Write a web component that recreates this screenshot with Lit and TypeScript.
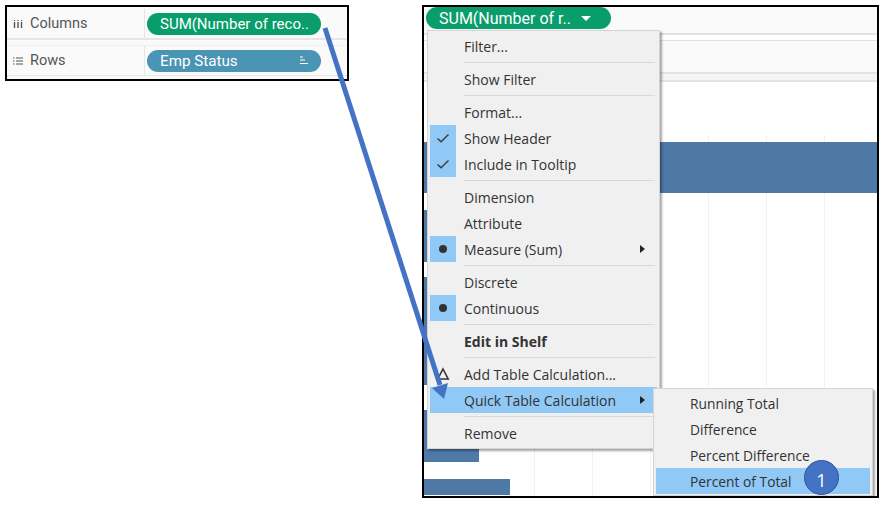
import { LitElement, html, css, svg } from "lit";
import { customElement } from "lit/decorators.js";

type Row = { label?: string; mark?: "check" | "dot" | "delta"; bold?: boolean; more?: boolean; active?: boolean; sep?: boolean };

const menuRows: Row[] = [
  { label: "Filter..." },
  { sep: true },
  { label: "Show Filter" },
  { sep: true },
  { label: "Format..." },
  { label: "Show Header", mark: "check" },
  { label: "Include in Tooltip", mark: "check" },
  { sep: true },
  { label: "Dimension" },
  { label: "Attribute" },
  { label: "Measure (Sum)", mark: "dot", more: true },
  { sep: true },
  { label: "Discrete" },
  { label: "Continuous", mark: "dot" },
  { sep: true },
  { label: "Edit in Shelf", bold: true },
  { sep: true },
  { label: "Add Table Calculation...", mark: "delta" },
  { label: "Quick Table Calculation", more: true, active: true },
  { sep: true },
  { label: "Remove" },
];

// chart bars: top, height, width (px from the frame's left edge)
const bars = [
  [135, 51, 460],
  [203, 52, 10],
  [270, 108, 10],
  [403, 52, 55],
  [472, 16, 86],
];
const gridLines = [110, 168, 226, 284, 342, 400];

@customElement("app-root")
export class AppRoot extends LitElement {
  static styles = css`
    :host {
      display: block;
      width: 889px;
      height: 506px;
      position: relative;
      background: #fff;
      overflow: hidden;
      font-family: "Open Sans", "Noto Sans", sans-serif;
      color: #333;
    }
    .page {
      display: flex;
      align-items: flex-start;
      padding: 5px 0 0 5px;
      gap: 73px;
    }
    .shelves {
      width: 344px;
      height: 76px;
      box-sizing: border-box;
      border: 2px solid #000;
      background: #fafafa;
      font-family: Roboto, sans-serif;
      font-size: 14.5px;
      color: #555;
      display: flex;
      flex-direction: column;
      gap: 5px;
      padding-top: 2px;
    }
    .shelf {
      display: flex;
      align-items: center;
      height: 31px;
      border-bottom: 2px solid #e6e6e6;
      box-sizing: border-box;
    }
    .shelf:last-child {
      border-top: 1px solid #efefef;
      border-bottom: 1px solid #e6e6e6;
    }
    .shelf-label {
      width: 138px;
      height: 100%;
      box-sizing: border-box;
      display: flex;
      align-items: center;
      gap: 7px;
      padding-left: 6px;
      border-right: 1px solid #e6e6e6;
    }
    .shelf-label svg {
      width: 10px;
      height: 10px;
    }
    .pill {
      margin-left: 2px;
      width: 174px;
      height: 22px;
      border-radius: 11px;
      display: flex;
      align-items: center;
      justify-content: space-between;
      box-sizing: border-box;
      padding: 0 12px 0 13px;
      color: #fff;
      font-size: 15px;
    }
    .green {
      background: #0a9d6c;
    }
    .teal {
      background: #4a94b4;
      font-size: 15.2px;
    }
    .frame {
      position: relative;
      width: 457px;
      height: 493px;
      box-sizing: border-box;
      border: 2px solid #000;
      background: #fff;
      overflow: hidden;
    }
    .band {
      height: 26px;
      background: #fafafa;
      border-bottom: 2px solid #e2e2e2;
    }
    .band + .band {
      margin-top: 5px;
      border-top: 1px solid #e2e2e2;
      height: 31px;
    }
    .band-foot {
      height: 6px;
      background: #f5f5f5;
      border-bottom: 2px solid #e2e2e2;
    }
    .grid-line {
      position: absolute;
      top: 128px;
      bottom: 0;
      width: 1px;
      background: #f1f1f1;
    }
    .bar {
      position: absolute;
      left: 0;
      background: #4e79a7;
    }
    .frame-pill {
      position: absolute;
      left: 2px;
      top: 0;
      width: 185px;
      height: 22px;
      border-radius: 11px;
      background: #0a9d6c;
      color: #fff;
      font-family: Roboto, sans-serif;
      font-size: 16px;
      display: flex;
      align-items: center;
      box-sizing: border-box;
      padding-left: 13px;
      gap: 10px;
    }
    .caret {
      width: 0;
      height: 0;
      border: 5px solid transparent;
      border-top: 5px solid #fff;
      border-bottom: 0;
    }
    .menu {
      position: absolute;
      background: #f0f0f0;
      border: 1px solid #d4d4d4;
      box-shadow: 2px 2px 2px rgba(0, 0, 0, 0.35);
      box-sizing: border-box;
      font-size: 14px;
      color: #333;
    }
    .main {
      left: 3px;
      top: 23px;
      width: 233px;
      height: 419px;
      padding: 2px;
    }
    .sub {
      left: 229px;
      top: 381px;
      width: 220px;
      height: 108px;
      padding: 1px 2px;
      font-size: 13.8px;
    }
    .item {
      height: 26px;
      display: flex;
      align-items: center;
      position: relative;
    }
    .item.active {
      background: #90c8f6;
    }
    .mark {
      width: 26px;
      height: 26px;
      flex: none;
      margin-right: 8px;
      display: flex;
      align-items: center;
      justify-content: center;
    }
    .mark.on {
      background: #90c8f6;
    }
    .mark svg {
      width: 14px;
      height: 14px;
    }
    .label.bold {
      font-weight: 700;
    }
    .more {
      margin-left: auto;
      margin-right: 12px;
      width: 0;
      height: 0;
      border: 4px solid transparent;
      border-left: 5px solid #222;
      border-right: 0;
    }
    .sep {
      height: 1px;
      margin: 3px 2px 3px 34px;
      background: #d9d9d9;
    }
    .sub .item {
      padding-left: 34px;
    }
    .badge {
      position: absolute;
      left: 148px;
      top: -8px;
      width: 35px;
      height: 35px;
      box-sizing: border-box;
      border-radius: 50%;
      background: #4472c4;
      border: 1px solid #2f5597;
      color: #fff;
      font-size: 18px;
      padding-top: 4px;
      display: flex;
      align-items: center;
      justify-content: center;
    }
    .arrow {
      position: absolute;
      inset: 0;
      width: 889px;
      height: 506px;
      pointer-events: none;
    }
  `;

  private markIcon(mark?: Row["mark"]) {
    if (mark === "check") {
      return html`<svg viewBox="0 0 14 14"><path d="M1.5 7.5l3.6 3.2L12.5 3.6" fill="none" stroke="#3a3a3a" stroke-width="1.4" /></svg>`;
    }
    if (mark === "dot") {
      return html`<svg viewBox="0 0 14 14"><circle cx="7" cy="7" r="4" fill="#333" /></svg>`;
    }
    if (mark === "delta") {
      return html`<svg viewBox="0 0 14 14"><path d="M7 2L12.2 12H1.8Z" fill="none" stroke="#333" stroke-width="1.6" /></svg>`;
    }
    return null;
  }

  private renderRow(row: Row) {
    if (row.sep) return html`<div class="sep"></div>`;
    const on = row.mark === "check" || row.mark === "dot";
    return html`<div class="item ${row.active ? "active" : ""}">
      <span class="mark ${on ? "on" : ""}">${this.markIcon(row.mark)}</span>
      <span class="label ${row.bold ? "bold" : ""}">${row.label}</span>
      ${row.more ? html`<span class="more"></span>` : null}
    </div>`;
  }

  render() {
    return html`
      <div class="page">
        <div class="shelves">
          <div class="shelf">
            <div class="shelf-label">
              <svg viewBox="0 0 10 10"><path d="M1.5 3v6M5 3v6M8.5 3v6" stroke="#555" stroke-width="1.4" /><path d="M1.5 1v1M5 1v1M8.5 1v1" stroke="#555" stroke-width="1.2" /></svg>
              Columns
            </div>
            <div class="pill green">SUM(Number of reco..</div>
          </div>
          <div class="shelf">
            <div class="shelf-label">
              <svg viewBox="0 0 10 10"><path d="M3 2h7M3 5h7M3 8h7M0 2h1.5M0 5h1.5M0 8h1.5" stroke="#555" stroke-width="1" /></svg>
              Rows
            </div>
            <div class="pill teal">
              Emp Status
              <svg width="10" height="9" viewBox="0 0 10 9"><path d="M1 1h3M1 4h5M1 7.5h8" stroke="#fff" stroke-width="1.2" /></svg>
            </div>
          </div>
        </div>
        <div class="frame">
          <div class="band"></div>
          <div class="band"></div>
          <div class="band-foot"></div>
          ${gridLines.map((x) => html`<div class="grid-line" style="left:${x}px"></div>`)}
          ${bars.map(([top, h, w]) => html`<div class="bar" style="top:${top}px;height:${h}px;width:${w}px"></div>`)}
          <div class="frame-pill">SUM(Number of r.. <span class="caret"></span></div>
          <div class="menu main">${menuRows.map((r) => this.renderRow(r))}</div>
          <div class="menu sub">
            <div class="item">Running Total</div>
            <div class="item">Difference</div>
            <div class="item">Percent Difference</div>
            <div class="item active">Percent of Total<span class="badge">1</span></div>
          </div>
        </div>
      </div>
      <svg class="arrow" viewBox="0 0 889 506">
        ${svg`<path d="M325 28L440 385" stroke="#4472c4" stroke-width="5" fill="none" />
        <path d="M444 399L432 388L448 383Z" fill="#4472c4" />`}
      </svg>
    `;
  }
}
